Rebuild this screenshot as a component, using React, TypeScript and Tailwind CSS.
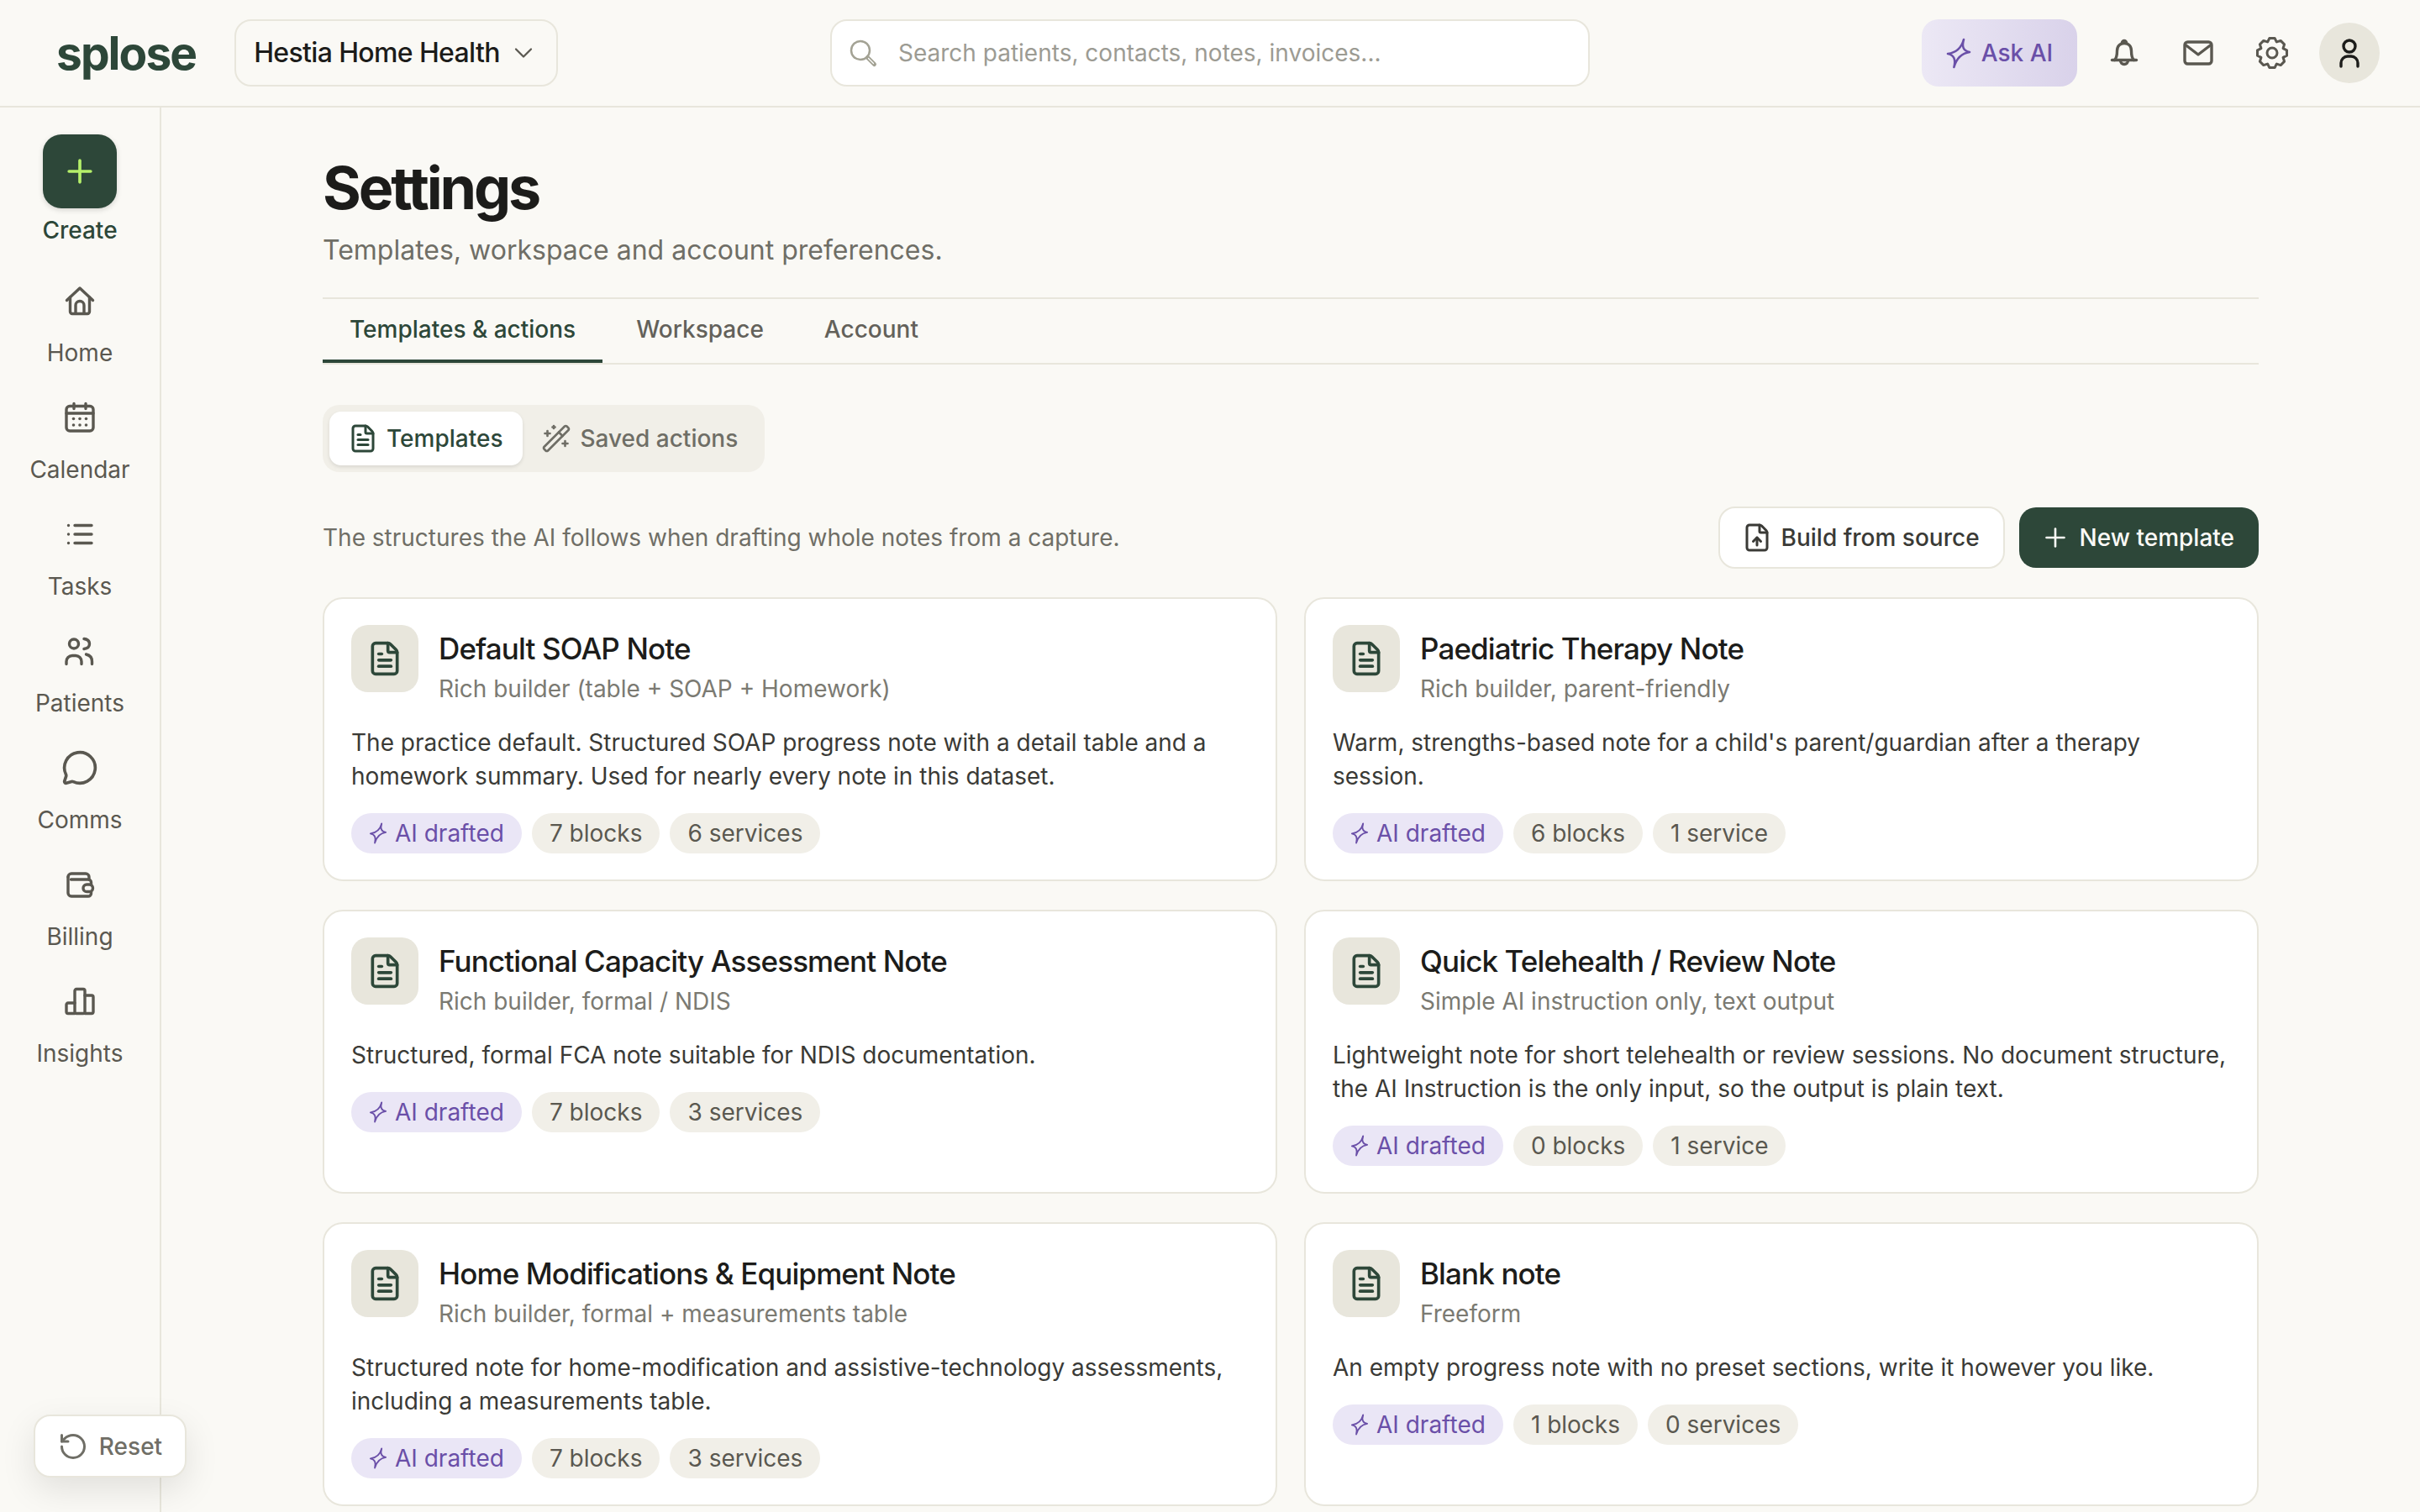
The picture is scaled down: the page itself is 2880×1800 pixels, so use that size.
import { ChevronDown, FileText, FileUp, MessageCircle, Plus, RotateCcw, WandSparkles } from "lucide-react";
import type { ReactNode } from "react";

function Glyph({ children, size = 40 }: { children: ReactNode; size?: number }) {
  return (
    <svg
      width={size}
      height={size}
      viewBox="0 0 40 40"
      fill="none"
      stroke="currentColor"
      strokeWidth={3.4}
      strokeLinecap="round"
      strokeLinejoin="round"
      className="shrink-0"
    >
      {children}
    </svg>
  );
}

function Sparkle({ className }: { className: string }) {
  return (
    <svg viewBox="-2 -2 30 37" fill="none" stroke="currentColor" strokeWidth={2.6} strokeLinejoin="round" className={className}>
      <path d="M19 0Q15 13 26 15Q12 17 7.4 33Q11 19 0 17Q15 15 19 0Z" />
    </svg>
  );
}

// eight rounded teeth round the ring
const gearPath = (() => {
  const pts: string[] = [];
  const steps = 8;
  for (let i = 0; i < steps; i++) {
    const a = (i / steps) * Math.PI * 2 - Math.PI / 2;
    const w = Math.PI / steps;
    const p = (r: number, t: number) => `${(20 + r * Math.cos(t)).toFixed(2)} ${(20 + r * Math.sin(t)).toFixed(2)}`;
    pts.push(`${i === 0 ? "M" : "L"}${p(14.2, a - w * 0.98)}`);
    pts.push(`L${p(17.8, a - w * 0.45)}`);
    pts.push(`L${p(17.8, a + w * 0.45)}`);
    pts.push(`L${p(14.2, a + w * 0.98)}`);
  }
  return pts.join("") + "Z";
})();

const navItems: { label: string; icon: ReactNode }[] = [
  {
    label: "Home",
    icon: (
      <Glyph>
        <path d="M4.5 19.5 20 5l15.5 14.5" />
        <path d="M8.500 16v17a2.500 2.500 0 0 0 2.500 2.500h18a2.500 2.500 0 0 0 2.500-2.500V16" />
        <path d="M15 35V25.500a5 5 0 0 1 10 0V35" />
      </Glyph>
    ),
  },
  {
    label: "Calendar",
    icon: (
      <Glyph>
        <rect x="4" y="6.500" width="32" height="29.500" rx="4" />
        <path d="M13 3.500v6M27 3.500v6M4 15h32" />
        <g fill="currentColor" stroke="none">
          <circle cx="12.500" cy="21.500" r="1.800" />
          <circle cx="20" cy="21.500" r="1.800" />
          <circle cx="27.500" cy="21.500" r="1.800" />
          <circle cx="12.500" cy="29" r="1.800" />
          <circle cx="20" cy="29" r="1.800" />
          <circle cx="27.500" cy="29" r="1.800" />
        </g>
      </Glyph>
    ),
  },
  {
    label: "Tasks",
    icon: (
      <Glyph>
        <path d="M14 9.500h20M14 20h20M14 30.500h20" />
        <path d="M6.500 9.500h.01M6.500 20h.01M6.500 30.500h.01" />
      </Glyph>
    ),
  },
  {
    label: "Patients",
    icon: (
      <Glyph>
        <circle cx="13" cy="11.500" r="5.500" />
        <path d="M25 5.500c4 .5 6.500 2.800 6.500 6s-2.500 5.500-6.500 6" />
        <path d="M4 35.500V32.500a7 7 0 0 1 7-7h4a7 7 0 0 1 7 7v3" />
        <path d="M27.500 24c4.500 1 7 4 7 8.500v3" />
      </Glyph>
    ),
  },
  {
    label: "Comms",
    icon: <MessageCircle size={44} strokeWidth={2} />,
  },
  {
    label: "Billing",
    icon: (
      <Glyph>
        <path d="M31 14V11a4 4 0 0 0-4-4H10a4 4 0 0 0-4 4" />
        <path d="M6 11v19a4 4 0 0 0 4 4h20a3.500 3.500 0 0 0 3.500-3.500V28.500" />
        <path d="M33.500 20v-2.500A3.500 3.500 0 0 0 30 14H9.500" />
        <rect x="24" y="20" width="11.500" height="8.500" rx="4.250" />
      </Glyph>
    ),
  },
  {
    label: "Insights",
    icon: (
      <Glyph>
        <path d="M14 22H6a2 2 0 0 0-2 2v8.500a2 2 0 0 0 2 2h8" />
        <rect x="14" y="5.500" width="12" height="29" rx="2" />
        <path d="M26 13h8a2 2 0 0 1 2 2v17.500a2 2 0 0 1-2 2h-8" />
      </Glyph>
    ),
  },
];

const templates = [
  {
    title: "Default SOAP Note",
    sub: "Rich builder (table + SOAP + Homework)",
    desc: "The practice default. Structured SOAP progress note with a detail table and a homework summary. Used for nearly every note in this dataset.",
    chips: ["7 blocks", "6 services"],
  },
  {
    title: "Paediatric Therapy Note",
    sub: "Rich builder, parent-friendly",
    desc: "Warm, strengths-based note for a child's parent/guardian after a therapy session.",
    chips: ["6 blocks", "1 service"],
  },
  {
    title: "Functional Capacity Assessment Note",
    sub: "Rich builder, formal / NDIS",
    desc: "Structured, formal FCA note suitable for NDIS documentation.",
    chips: ["7 blocks", "3 services"],
  },
  {
    title: "Quick Telehealth / Review Note",
    sub: "Simple AI instruction only, text output",
    desc: "Lightweight note for short telehealth or review sessions. No document structure, the AI Instruction is the only input, so the output is plain text.",
    chips: ["0 blocks", "1 service"],
  },
  {
    title: "Home Modifications & Equipment Note",
    sub: "Rich builder, formal + measurements table",
    desc: "Structured note for home-modification and assistive-technology assessments, including a measurements table.",
    chips: ["7 blocks", "3 services"],
  },
  {
    title: "Blank note",
    sub: "Freeform",
    desc: "An empty progress note with no preset sections, write it however you like.",
    chips: ["1 blocks", "0 services"],
  },
];

function TemplateCard({ title, sub, desc, chips }: (typeof templates)[number]) {
  return (
    <div className="rounded-[24px] border-2 border-[#e8e6dc] bg-white px-[32px] py-[31px]">
      <div className="flex h-[80px] gap-[24px]">
        <div className="flex h-[80px] w-[80px] shrink-0 items-center justify-center rounded-[20px] bg-[#e8e6dc] text-[#2d4739]">
          <FileText size={44} strokeWidth={2} />
        </div>
        <div className="pt-[6px]">
          <div className="text-[35px] leading-[44px] font-[550] tracking-[-0.025em] text-[#1c1c1a]">{title}</div>
          <div className="mt-[6px] text-[28px] leading-[40px] text-[#7b7a72]">{sub}</div>
        </div>
      </div>
      <p className="mt-[40px] text-[28px] leading-[40px] text-[#3a3a36]">{desc}</p>
      <div className="mt-[24px] flex gap-[12px]">
        <span className="flex h-[48px] items-center gap-[9px] rounded-full bg-[#eae6f6] pr-[21px] pl-[21px] text-[28px] text-[#6a4fa8]">
          <Sparkle className="h-[26px] w-[22px]" />
          AI drafted
        </span>
        {chips.map((c) => (
          <span key={c} className="flex h-[48px] items-center rounded-full bg-[#f1efe8] px-[21px] text-[28px] text-[#5a5850]">
            {c}
          </span>
        ))}
      </div>
    </div>
  );
}

export default function App() {
  return (
    <div className="relative flex h-[1800px] flex-col overflow-hidden bg-[#faf9f5] [font-family:Inter,sans-serif]">
      {/* Top bar */}
      <header className="grid h-[128px] shrink-0 grid-cols-[1fr_904px_1fr] items-center border-b-2 border-[#e8e6dc] px-[48px]">
        <div className="flex items-center">
          <span className="ml-[19px] text-[55px] leading-none font-bold tracking-[-0.035em] text-[#2d4739]">splose</span>
          <button className="ml-[46px] flex h-[80px] items-center gap-[10px] rounded-[20px] border-2 border-[#e8e6dc] pr-[21px] pl-[21px] text-[32px] font-medium tracking-[-0.02em] text-[#1c1c1a]">
            Hestia Home Health
            <ChevronDown size={36} strokeWidth={1.5} className="text-[#5a5850]" />
          </button>
        </div>
        <div className="flex h-[80px] items-center gap-[24px] rounded-[20px] border-2 border-[#e8e6dc] bg-white pl-[19px]">
          <svg width="36" height="36" viewBox="0 0 36 36" fill="none" stroke="#a3a294" strokeWidth="2.500" strokeLinecap="round" className="shrink-0">
            <circle cx="15" cy="15" r="11" />
            <path d="M23.500 23.500l8 8" strokeWidth="5" />
            <path d="M24.500 24.500l6 6" stroke="#fff" strokeWidth="1.200" />
          </svg>
          <span className="text-[28px] text-[#9c9b93]">Search patients, contacts, notes, invoices...</span>
        </div>
        <div className="flex items-center justify-end gap-[20px]">
          <button className="flex h-[80px] w-[185px] items-center justify-center gap-[12px] rounded-[20px] bg-gradient-to-r from-[#ece8f5] to-[#d9d2ea] text-[28px] font-medium text-[#6a4fa8]">
            <Sparkle className="h-[37px] w-[30px]" />
            Ask AI
          </button>
          <div className="flex items-center gap-[16px] text-[#5a5850]">
            <button className="flex h-[72px] w-[72px] items-center justify-center">
              <Glyph>
                <path d="M5.500 28.500h29" />
                <path d="M8.500 28.500c2.500-2.500 3-6 3-11C11.500 12 15 8.500 20 8.500s8.500 3.500 8.500 9c0 5 .5 8.500 3 11" />
                <path d="M17.500 8a2.500 2.500 0 0 1 5 0" />
                <path d="M15.500 29a4.500 4.500 0 0 0 9 0" />
              </Glyph>
            </button>
            <button className="flex h-[72px] w-[72px] items-center justify-center">
              <Glyph>
                <rect x="4" y="7" width="32" height="26" rx="3.500" />
                <path d="M5 10.500 20 22l15-11.500" />
              </Glyph>
            </button>
            <button className="flex h-[72px] w-[72px] items-center justify-center">
              <Glyph>
                <path d={gearPath} strokeWidth={3} />
                <circle cx="20" cy="20" r="6" strokeWidth={3} />
              </Glyph>
            </button>
          </div>
          <div className="flex h-[72px] w-[72px] items-center justify-center rounded-full bg-[#e8e6dc] text-[#1c1c1a]">
            <Glyph>
              <circle cx="20" cy="12" r="7" />
              <path d="M10 36v-4a8 8 0 0 1 8-8h4a8 8 0 0 1 8 8v4" />
            </Glyph>
          </div>
        </div>
      </header>

      <div className="flex min-h-0 flex-1">
        {/* Left rail */}
        <aside className="flex w-[192px] shrink-0 flex-col items-center border-r-2 border-[#e8e6dc] pt-[32px]">
          <button className="flex h-[88px] w-[88px] items-center justify-center rounded-[22px] bg-[#2d4739] text-[#b5f06a] shadow-[0_2px_6px_rgba(0,0,0,0.15)]">
            <Plus size={44} strokeWidth={2} />
          </button>
          <span className="mt-[8px] text-[28px] leading-[36px] font-medium text-[#2d4739]">Create</span>
          <nav className="mt-[44px] flex flex-col items-center gap-[37px] text-[#5a5850]">
            {navItems.map((item) => (
              <div key={item.label} className="flex flex-col items-center gap-[22px]">
                <div className="flex h-[44px] items-center">{item.icon}</div>
                <span className="text-[28px] leading-[36px]">{item.label}</span>
              </div>
            ))}
          </nav>
        </aside>

        {/* Settings */}
        <main className="min-w-0 flex-1 overflow-hidden">
          <div className="mx-auto w-[2304px] pt-[56px]">
            <h1 className="text-[70px] leading-[80px] font-bold tracking-[-0.045em] text-[#1c1c1a]">Settings</h1>
            <p className="mt-[12px] text-[32px] leading-[44px] text-[#6f6e66]">Templates, workspace and account preferences.</p>

            <div className="mt-[34px] flex gap-[8px] border-y-2 border-[#e8e6dc]">
              <div className="flex h-[76px] items-center border-b-4 border-[#2d4739] px-[32px] text-[28px] font-medium text-[#2d4739]">Templates &amp; actions</div>
              <div className="flex h-[76px] items-center px-[32px] pb-[4px] text-[28px] font-medium text-[#63615a]">Workspace</div>
              <div className="flex h-[76px] items-center px-[32px] pb-[4px] text-[28px] font-medium text-[#63615a]">Account</div>
            </div>

            <div className="mt-[48px] flex w-fit gap-[2px] rounded-[20px] bg-[#f1efe8] py-[8px] pr-[10px] pl-[8px]">
              <div className="flex h-[64px] items-center gap-[10px] rounded-[14px] bg-white pr-[24px] pl-[22px] text-[28px] font-medium text-[#2d4739] shadow-[0_2px_4px_rgba(0,0,0,0.1)]">
                <FileText size={36} strokeWidth={2} />
                Templates
              </div>
              <div className="flex h-[64px] items-center gap-[10px] pr-[22px] pl-[20px] text-[28px] font-medium text-[#6f6e66]">
                <WandSparkles size={36} strokeWidth={1.75} />
                Saved actions
              </div>
            </div>

            <div className="mt-[41px] flex items-center justify-between">
              <p className="text-[28px] text-[#6f6e66]">The structures the AI follows when drafting whole notes from a capture.</p>
              <div className="flex items-center gap-[17px]">
                <button className="flex h-[74px] items-center gap-[11px] rounded-[20px] border-2 border-[#e8e6dc] bg-white pr-[28px] pl-[26px] text-[28px] font-medium text-[#3a3a36]">
                  <FileUp size={36} strokeWidth={2} />
                  Build from source
                </button>
                <button className="flex h-[72px] items-center gap-[11px] rounded-[20px] bg-[#2d4739] pr-[29px] pl-[25px] text-[28px] font-medium text-[#fbfaf6]">
                  <Plus size={36} strokeWidth={1.75} />
                  New template
                </button>
              </div>
            </div>

            <div className="mt-[34px] grid grid-cols-2 gap-x-[32px] gap-y-[34px]">
              {templates.map((t) => (
                <TemplateCard key={t.title} {...t} />
              ))}
            </div>
          </div>
        </main>
      </div>

      {/* Floating reset */}
      <button className="absolute bottom-[41px] left-[40px] flex h-[75px] w-[182px] items-center justify-center gap-[13px] rounded-[20px] border-2 border-[#e8e6dc] bg-white text-[28px] font-medium text-[#6f6e66] shadow-[0_14px_40px_rgba(0,0,0,0.1)]">
        <RotateCcw size={36} strokeWidth={2} />
        Reset
      </button>
    </div>
  );
}
